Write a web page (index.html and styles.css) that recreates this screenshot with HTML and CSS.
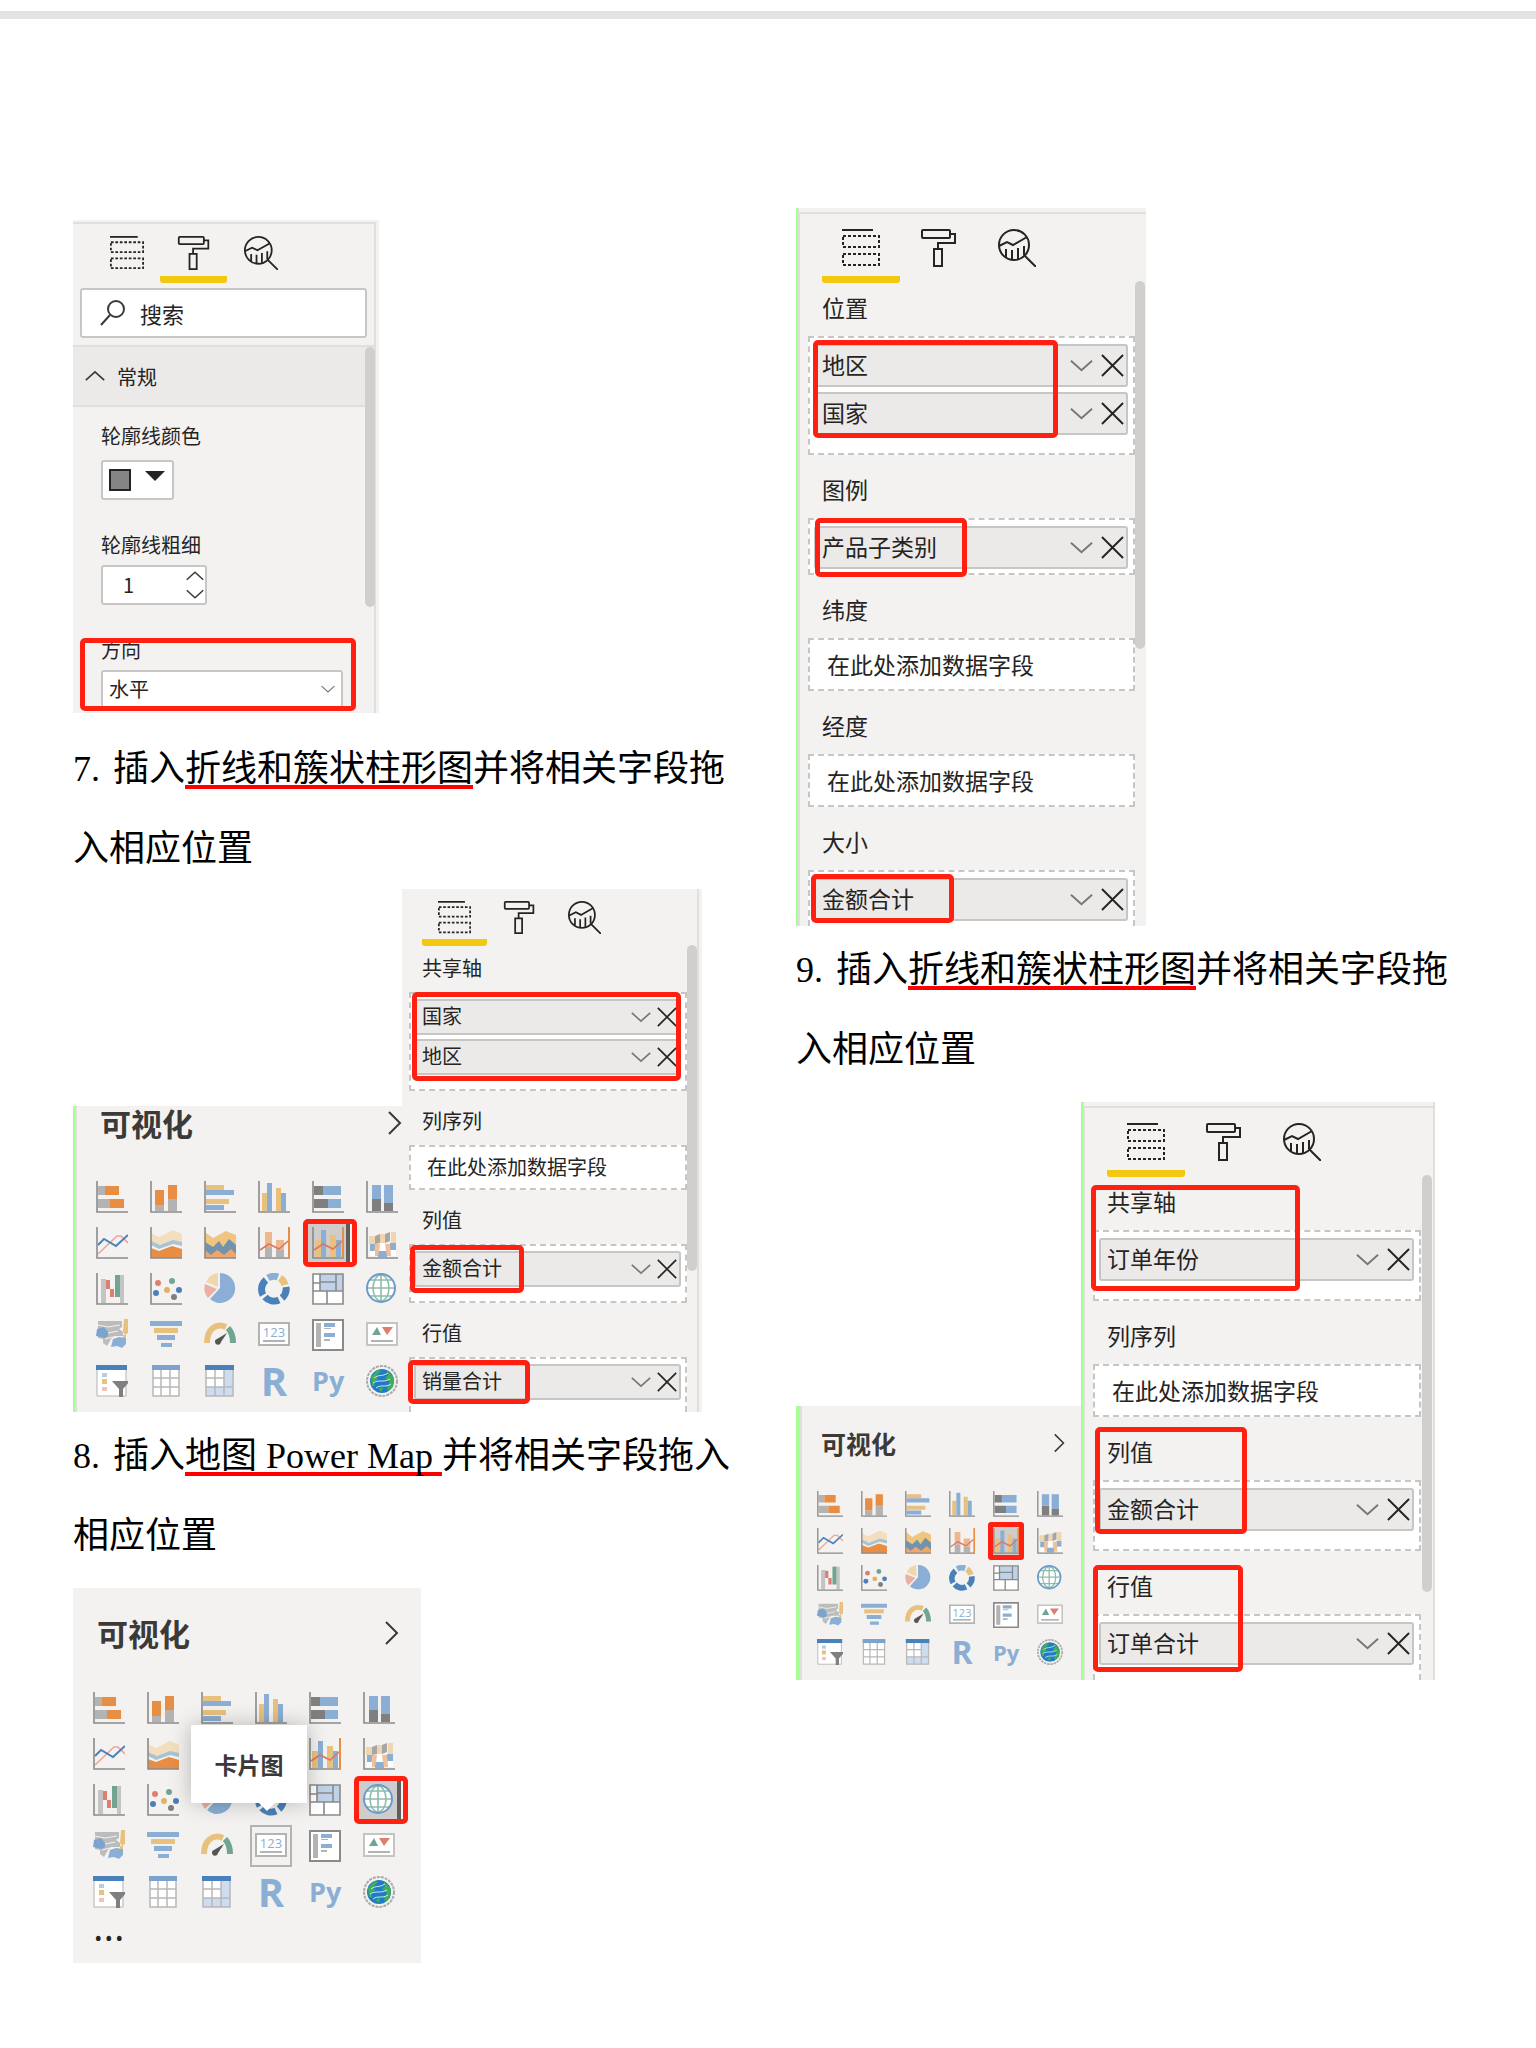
FILE: index.html
```html
<!DOCTYPE html>
<html lang="zh-CN">
<head>
  <meta charset="UTF-8">
  <meta name="viewport" content="width=device-width, initial-scale=1.0">
  <title>Power BI 实验步骤</title>
  <link rel="stylesheet" href="styles.css">
  <script src="script.js"></script>
</head>
<body>
  <!-- 图标库 -->
  <svg class="sprite" xmlns="http://www.w3.org/2000/svg">
    <symbol id="t-fields" viewBox="0 0 38 38">
      <path d="M0 1H31" stroke="#252423" stroke-width="2"/>
      <path d="M1 7H37V18H1ZM1 25H37V36H1Z" fill="none" stroke="#252423" stroke-width="2" stroke-dasharray="3 2"/>
    </symbol>
    <symbol id="t-format" viewBox="0 0 38 38">
      <g fill="none" stroke="#252423" stroke-width="2">
        <rect x="2" y="1" width="28" height="8" rx="1"/>
        <path d="M30 5H35V14H18V20"/>
        <rect x="14" y="20" width="8" height="17"/>
      </g>
    </symbol>
    <symbol id="t-analytics" viewBox="0 0 38 38">
      <g fill="none" stroke="#252423" stroke-width="2">
        <circle cx="16" cy="16" r="15"/>
        <path d="M1 17L9 13L15 16L29 8M8 20V28M14 21V31M20 19V30M26 17V26M26 26L38 38"/>
      </g>
    </symbol>
    <symbol id="i-down" viewBox="0 0 24 24"><path d="M1 7L12 17L23 7" fill="none" stroke="#797775" stroke-width="2"/></symbol>
    <symbol id="i-up" viewBox="0 0 24 24"><path d="M1 17L12 7L23 17" fill="none" stroke="#3b3a39" stroke-width="2"/></symbol>
    <symbol id="i-right" viewBox="0 0 14 24"><path d="M1 1L12 12L1 23" fill="none" stroke="#3b3a39" stroke-width="2"/></symbol>
    <symbol id="i-close" viewBox="0 0 24 24"><path d="M1 1L23 23M23 1L1 23" fill="none" stroke="#252423" stroke-width="2"/></symbol>
    <symbol id="i-search" viewBox="0 0 26 26"><circle cx="16" cy="9" r="8" fill="none" stroke="#3b3a39" stroke-width="2"/><path d="M10 15L1 25" stroke="#3b3a39" stroke-width="2"/></symbol>

    <symbol id="v-bar" viewBox="0 0 32 32">
      <path fill="#b3b3b3" d="M2 5h7v9H2zM2 18h12v9H2z"/><path fill="#e88e44" d="M9 5h14v9H9zM14 18h14v9H14z"/>
      <path class="axis" d="M1 0V31H32"/>
    </symbol>
    <symbol id="v-col" viewBox="0 0 32 32">
      <path fill="#b3b3b3" d="M5 24h9v6H5zM18 18h9v12H18z"/><path fill="#e88e44" d="M5 9h9v15H5zM18 4h9v14H18z"/>
      <path class="axis" d="M1 0V31H32"/>
    </symbol>
    <symbol id="v-cbar" viewBox="0 0 32 32">
      <path fill="#e9c17f" d="M2 4h18v5H2zM2 18h23v5H2z"/><path fill="#8bafd4" d="M2 9h28v5H2zM2 24h18v5H2z"/>
      <path class="axis" d="M1 0V31H32"/>
    </symbol>
    <symbol id="v-ccol" viewBox="0 0 32 32">
      <path fill="#e9c17f" d="M4 12h5v18H4zM18 7h5v23h-5z"/><path fill="#8bafd4" d="M9 2h5v28H9zM23 12h5v18h-5z"/>
      <path class="axis" d="M1 0V31H32"/>
    </symbol>
    <symbol id="v-pbar" viewBox="0 0 32 32">
      <path fill="#7f7f7f" d="M2 5h9v9H2zM2 18h14v9H2z"/><path fill="#8bafd4" d="M11 5h18v9H11zM16 18h13v9H16z"/>
      <path class="axis" d="M1 0V31H32"/>
    </symbol>
    <symbol id="v-pcol" viewBox="0 0 32 32">
      <path fill="#7f7f7f" d="M6 18h9v12H6zM18 22h9v8h-9z"/><path fill="#8bafd4" d="M6 4h9v14H6zM18 4h9v18h-9z"/>
      <path class="axis" d="M1 0V31H32"/>
    </symbol>
    <symbol id="v-line" viewBox="0 0 32 32">
      <path d="M2 27L21 9L25 9L32 16" fill="none" stroke="#eda597" stroke-width="1.6"/>
      <path d="M2 18L8 12L20 19L32 8" fill="none" stroke="#4a81ba" stroke-width="2"/>
      <path class="axis" d="M1 0V31H32"/>
    </symbol>
    <symbol id="v-area" viewBox="0 0 32 32">
      <path fill="#f3dfbf" d="M1 6L9 10L23 3L32 7V16L1 18Z"/><path fill="#a6c4d4" d="M1 14L10 18L23 13L32 15V23L1 24Z"/>
      <path fill="#f3f2f1" d="M1 18L9 22L23 17L32 19V23L1 25Z"/><path fill="#e88e44" d="M1 21L9 24L22 19L32 22V31H1Z"/>
      <path class="axis" d="M1 0V31H32"/>
    </symbol>
    <symbol id="v-sarea" viewBox="0 0 32 32">
      <path fill="#f0c580" d="M1 5L9 11L22 4L32 8V28H1Z"/><path fill="#f1a569" d="M1 22H32V31H1Z"/>
      <path fill="#7293ad" d="M1 15L9 20L15 14L19 20L25 12L32 18V27L27 22L20 28L13 23L7 28L1 23Z"/>
      <path class="axis" d="M1 0V31H32"/>
    </symbol>
    <symbol id="v-lscol" viewBox="0 0 32 32">
      <path fill="#b3b3b3" d="M7 20h7v10H7zM18 23h8v7h-8z"/><path fill="#efb78c" d="M7 5h7v15H7zM18 13h8v10h-8z"/>
      <path d="M2 23L11 17L21 22L30 14" fill="none" stroke="#dd7564" stroke-width="1.6"/>
      <path class="axis" d="M1 0V31H32"/><path d="M31 0V31" stroke="#e88e44" stroke-width="2"/>
    </symbol>
    <symbol id="v-lccol" viewBox="0 0 32 32">
      <path fill="#e9c17f" d="M3 13h6v17H3zM18 8h6v22h-6z"/><path fill="#8bafd4" d="M9 3h5v27H9zM24 13h5v17h-5z"/>
      <path d="M2 23L11 17L21 22L30 14" fill="none" stroke="#dd7564" stroke-width="1.6"/>
      <path class="axis" d="M1 0V31H32"/><path d="M31 0V31" stroke="#e88e44" stroke-width="2"/>
    </symbol>
    <symbol id="v-ribbon" viewBox="0 0 32 32">
      <path fill="#f0d6af" d="M3 9h6v8H3zM14 7h5v9h-5zM25 5h5v11h-5z"/><path fill="#a6a6a6" d="M9 9l5-2v9l-5 1zM19 7l5-2v9l-5 2z"/>
      <path fill="#8bafd4" d="M4 17h5v7H4zM24 16h6v7h-6zM12 24h9v6h-9z"/><path fill="#f1c09a" d="M9 17h5l-2 12H8zM19 17h5l1 12h-4z"/>
      <path fill="#fff" d="M14 16h5v8h-5zM4 24h5v5H4zM25 23h5v6h-5z"/>
      <path class="axis" d="M1 0V31H32"/>
    </symbol>
    <symbol id="v-fall" viewBox="0 0 32 32">
      <path fill="#c4c4c4" d="M5 6h5v24H5zM24 2h4v28h-4z"/><path fill="#dd7f6e" d="M10 7h4v9h-4zM14 16h4v8h-4z"/><path fill="#71a592" d="M19 2h5v22h-5z"/>
      <path class="axis" d="M1 0V31H32"/>
    </symbol>
    <symbol id="v-scatter" viewBox="0 0 32 32">
      <circle cx="8" cy="10" r="3" fill="#dd7f6e"/><circle cx="22" cy="8" r="3" fill="#71a592"/><circle cx="17" cy="17" r="3" fill="#e0b364"/>
      <circle cx="6" cy="20" r="3" fill="#4a81ba"/><circle cx="29" cy="17" r="3" fill="#4a81ba"/><circle cx="24" cy="24" r="3" fill="#7f7f7f"/>
      <path class="axis" d="M1 0V31H32"/>
    </symbol>
    <symbol id="v-pie" viewBox="0 0 32 32">
      <path fill="#8bafd4" d="M16 15V0A15 15 0 1 1 6 26Z"/><path fill="#f0d6af" d="M14 14V0A15 15 0 0 0 2 9Z"/><path fill="#eab0a2" d="M13 16L1 11A15 15 0 0 0 4 25Z"/>
    </symbol>
    <symbol id="v-donut" viewBox="0 0 32 32">
      <g fill="none" stroke-width="7">
        <path d="M10 5A12 12 0 0 1 20 4" stroke="#8bafd4"/><path d="M22 5A12 12 0 0 1 27 12" stroke="#e9c17f"/>
        <path d="M28 14A12 12 0 0 1 24 25M21 27A12 12 0 0 1 7 24M5 22A12 12 0 0 1 8 7" stroke="#4a81ba"/>
      </g>
    </symbol>
    <symbol id="v-tree" viewBox="0 0 32 32">
      <path fill="#fff" d="M1 1H31V31H1Z"/><path fill="#bfd2e8" d="M8 1H31V18H8Z"/>
      <path d="M1 1H31V31H1ZM1 18H31M8 1V18M1 10H8M15 18V31M8 9H24M24 1V18" fill="none" stroke="#8a8a8a" stroke-width="1.6"/>
    </symbol>
    <symbol id="v-globe" viewBox="0 0 32 32">
      <circle cx="15" cy="15" r="14" fill="#fff"/>
      <g fill="none" stroke="#8dbcaa" stroke-width="1.6"><ellipse cx="15" cy="15" rx="8" ry="13"/><path d="M1 15H29M4 7H26M4 23H26M15 1V29"/></g>
      <circle cx="15" cy="15" r="14" fill="none" stroke="#6b9bc9" stroke-width="2"/>
    </symbol>
    <symbol id="v-filled" viewBox="0 0 32 32">
      <path fill="#bcbcbc" d="M2 2H26V8L23 10L27 13V17H18L15 20L11 27L7 24V20L2 19V8Z"/>
      <path fill="#7ba3ce" d="M1 10L8 8L12 13V17L9 19L0 17Z"/>
      <path fill="#8bafd4" d="M17 20L23 18L30 19L30 25L26 29L21 27L15 28Z"/><path fill="#e9c17f" d="M28 0h4v14l-3 2-2-3zM27 16h3v3h-3z"/>
      <path d="M2 6L12 8L24 6M12 14L22 12M9 20L17 18" stroke="#f3f2f1" fill="none"/>
    </symbol>
    <symbol id="v-funnel" viewBox="0 0 32 32">
      <path fill="#8bafd4" d="M0 2h32v5H0zM7 16h18v5H7zM11 24h11v4H11z"/><path fill="#e9c17f" d="M4 9h24v5H4z"/>
    </symbol>
    <symbol id="v-gauge" viewBox="0 0 32 32">
      <path d="M3 24C3 9 13 4 22 8" fill="none" stroke="#e9c17f" stroke-width="6"/><path d="M24 9C28 13 29 17 29 24" fill="none" stroke="#71a592" stroke-width="6"/>
      <path fill="#555" d="M23 14L17 23A3 3 0 1 1 13 20Z"/>
    </symbol>
    <symbol id="v-card" viewBox="0 0 32 32">
      <path d="M1 4H31V26H1Z" fill="#fff" stroke="#b3b3b3" stroke-width="2"/><path d="M5 22H27" stroke="#b3b3b3" stroke-width="2"/>
    </symbol>
    <symbol id="v-multi" viewBox="0 0 32 32">
      <path d="M1 1H31V31H1Z" fill="#fff" stroke="#8a8a8a" stroke-width="2"/><path fill="#b3b3b3" d="M4 4h5v24H4zM12 9h7v1h-7zM12 20h6v2h-6z"/>
      <path fill="#8bafd4" d="M12 4h11v4H12zM12 14h11v4H12z"/>
    </symbol>
    <symbol id="v-kpi" viewBox="0 0 32 32">
      <path d="M1 4H31V26H1Z" fill="#fff" stroke="#c4c4c4" stroke-width="2"/><path d="M5 22H27" stroke="#b3b3b3" stroke-width="2"/>
      <path fill="#71a592" d="M6 16L11 8L15 16Z"/><path fill="#dd7f6e" d="M16 8H27L21 16Z"/>
    </symbol>
    <symbol id="v-slicer" viewBox="0 0 32 32">
      <path d="M1 1H30V31H1Z" fill="#fff" stroke="#b3b3b3"/><path fill="#4a81ba" d="M0 0h31v5H0z"/>
      <path fill="#b7cde6" d="M6 8h5v4H6z"/><path fill="#e9c17f" d="M6 14h5v5H6z"/><path fill="#f0c3b8" d="M6 22h5v4H6z"/>
      <path fill="#7f7f7f" d="M16 16H34L27 24V33H23V24Z"/>
    </symbol>
    <symbol id="v-table" viewBox="0 0 32 32">
      <path d="M3 2H29V31H3ZM3 13H29M3 22H29M11 5V31M20 5V31" fill="#fff" stroke="#b8b8b8" stroke-width="1.5"/><path fill="#7ba3ce" d="M2 0h28v5H2z"/>
    </symbol>
    <symbol id="v-matrix" viewBox="0 0 32 32">
      <path fill="#fff" d="M2 2H29V31H2Z"/><path fill="#cddcee" d="M20 5h9v26H2v-9h18z"/>
      <path d="M2 2H29V31H2ZM2 13H20M2 22H29M11 5V31M20 5V31" fill="none" stroke="#b8b8b8" stroke-width="1.5"/><path fill="#4a81ba" d="M1 0h29v5H1z"/>
    </symbol>
    <symbol id="v-arcgis" viewBox="0 0 32 32">
      <circle cx="16" cy="16" r="15" fill="none" stroke="#aaa" stroke-width="2" stroke-dasharray="3 1"/><circle cx="16" cy="16" r="12" fill="#1f7cc4"/>
      <path fill="#3fae5a" d="M5 12L11 5L15 6L10 11L12 14L8 17L9 21L6 21ZM21 5L28 13L27 22L22 26L21 22L24 17L19 13L22 10ZM12 24L17 22L16 27Z"/>
      <path d="M8 13C13 9 16 12 22 8M7 18C13 14 17 18 24 14M10 23C15 19 19 23 25 19" fill="none" stroke="#d5e6f2" stroke-width="1"/>
    </symbol>
  </svg>

  <div class="page-break"></div>

  <main class="page">
    <section class="column column-left">

      <figure class="shot">
        <div class="pane pane-format">
          <nav class="tabs">
            <button class="tab" aria-label="字段"><svg><use href="#t-fields"/></svg></button>
            <button class="tab active" aria-label="格式"><svg><use href="#t-format"/></svg></button>
            <button class="tab" aria-label="分析"><svg><use href="#t-analytics"/></svg></button>
          </nav>
          <label class="search">
            <svg><use href="#i-search"/></svg>
            <input type="text" placeholder="搜索" aria-label="搜索">
          </label>
          <button class="group-title"><svg><use href="#i-up"/></svg>常规</button>
          <div class="form">
            <div class="form-row">
              <label for="color">轮廓线颜色</label>
              <button class="swatch" id="color"><i></i><b></b></button>
            </div>
            <div class="form-row">
              <label for="weight">轮廓线粗细</label>
              <div class="stepper">
                <input type="number" id="weight" value="1">
                <div class="steps">
                  <button aria-label="增加"><svg><use href="#i-up"/></svg></button>
                  <button aria-label="减少"><svg class="flip"><use href="#i-up"/></svg></button>
                </div>
              </div>
            </div>
            <div class="form-row">
              <label for="direction">方向</label>
              <div class="dropdown">
                <select id="direction"><option>水平</option></select>
                <svg><use href="#i-down"/></svg>
              </div>
            </div>
          </div>
          <span class="scrollbar"></span>
          <span class="mark mark-direction"></span>
        </div>
      </figure>

      <p class="step step-first"><span class="num">7.</span>插入<u>折线和簇状柱形图</u>并将相关字段拖入相应位置</p>

      <figure class="shot">
        <div class="gallery gallery-cropped">
          <h2>可视化<svg><use href="#i-right"/></svg></h2>
          <div class="viz-grid" data-selected="lccol"></div>
        </div>
        <div class="pane pane-fields pane-small">
          <nav class="tabs">
            <button class="tab active" aria-label="字段"><svg><use href="#t-fields"/></svg></button>
            <button class="tab" aria-label="格式"><svg><use href="#t-format"/></svg></button>
            <button class="tab" aria-label="分析"><svg><use href="#t-analytics"/></svg></button>
          </nav>
          <h3>共享轴</h3>
          <div class="well">
            <div class="field">国家<button aria-label="选项"><svg><use href="#i-down"/></svg></button><button aria-label="删除"><svg><use href="#i-close"/></svg></button></div>
            <div class="field">地区<button aria-label="选项"><svg><use href="#i-down"/></svg></button><button aria-label="删除"><svg><use href="#i-close"/></svg></button></div>
          </div>
          <h3>列序列</h3>
          <div class="well empty">在此处添加数据字段</div>
          <h3>列值</h3>
          <div class="well">
            <div class="field">金额合计<button aria-label="选项"><svg><use href="#i-down"/></svg></button><button aria-label="删除"><svg><use href="#i-close"/></svg></button></div>
          </div>
          <h3>行值</h3>
          <div class="well last">
            <div class="field">销量合计<button aria-label="选项"><svg><use href="#i-down"/></svg></button><button aria-label="删除"><svg><use href="#i-close"/></svg></button></div>
          </div>
          <span class="scrollbar"></span>
          <span class="mark mark-axis"></span>
          <span class="mark mark-column"></span>
          <span class="mark mark-line"></span>
        </div>
      </figure>

      <p class="step"><span class="num">8.</span>插入<u>地图 Power Map </u>并将相关字段拖入相应位置</p>

      <figure class="shot spaced">
        <div class="gallery gallery-full">
          <h2>可视化<svg><use href="#i-right"/></svg></h2>
          <div class="viz-grid" data-selected="globe" data-hover="card"></div>
          <div class="more">···</div>
          <div class="tooltip">卡片图</div>
        </div>
      </figure>
    </section>

    <section class="column">

      <figure class="shot">
        <div class="pane pane-fields pane-map">
          <nav class="tabs">
            <button class="tab active" aria-label="字段"><svg><use href="#t-fields"/></svg></button>
            <button class="tab" aria-label="格式"><svg><use href="#t-format"/></svg></button>
            <button class="tab" aria-label="分析"><svg><use href="#t-analytics"/></svg></button>
          </nav>
          <h3>位置</h3>
          <div class="well">
            <div class="field">地区<button aria-label="选项"><svg><use href="#i-down"/></svg></button><button aria-label="删除"><svg><use href="#i-close"/></svg></button></div>
            <div class="field">国家<button aria-label="选项"><svg><use href="#i-down"/></svg></button><button aria-label="删除"><svg><use href="#i-close"/></svg></button></div>
          </div>
          <h3>图例</h3>
          <div class="well single">
            <div class="field">产品子类别<button aria-label="选项"><svg><use href="#i-down"/></svg></button><button aria-label="删除"><svg><use href="#i-close"/></svg></button></div>
          </div>
          <h3>纬度</h3>
          <div class="well empty">在此处添加数据字段</div>
          <h3>经度</h3>
          <div class="well empty">在此处添加数据字段</div>
          <h3>大小</h3>
          <div class="well last">
            <div class="field">金额合计<button aria-label="选项"><svg><use href="#i-down"/></svg></button><button aria-label="删除"><svg><use href="#i-close"/></svg></button></div>
          </div>
          <span class="scrollbar"></span>
          <span class="mark mark-place"></span>
          <span class="mark mark-legend"></span>
          <span class="mark mark-size"></span>
        </div>
      </figure>

      <p class="step"><span class="num">9.</span>插入<u>折线和簇状柱形图</u>并将相关字段拖入相应位置</p>

      <figure class="shot spaced">
        <div class="gallery gallery-small">
          <h2>可视化<svg><use href="#i-right"/></svg></h2>
          <div class="viz-grid" data-selected="lccol"></div>
        </div>
        <div class="pane pane-fields pane-order">
          <nav class="tabs">
            <button class="tab active" aria-label="字段"><svg><use href="#t-fields"/></svg></button>
            <button class="tab" aria-label="格式"><svg><use href="#t-format"/></svg></button>
            <button class="tab" aria-label="分析"><svg><use href="#t-analytics"/></svg></button>
          </nav>
          <h3>共享轴</h3>
          <div class="well">
            <div class="field">订单年份<button aria-label="选项"><svg><use href="#i-down"/></svg></button><button aria-label="删除"><svg><use href="#i-close"/></svg></button></div>
          </div>
          <h3>列序列</h3>
          <div class="well empty">在此处添加数据字段</div>
          <h3>列值</h3>
          <div class="well">
            <div class="field">金额合计<button aria-label="选项"><svg><use href="#i-down"/></svg></button><button aria-label="删除"><svg><use href="#i-close"/></svg></button></div>
          </div>
          <h3>行值</h3>
          <div class="well last">
            <div class="field">订单合计<button aria-label="选项"><svg><use href="#i-down"/></svg></button><button aria-label="删除"><svg><use href="#i-close"/></svg></button></div>
          </div>
          <span class="scrollbar"></span>
          <span class="mark mark-axis"></span>
          <span class="mark mark-column"></span>
          <span class="mark mark-line"></span>
        </div>
      </figure>
    </section>
  </main>
</body>
</html>
```
FILE: styles.css
```css
* {
  margin: 0;
  padding: 0;
  box-sizing: border-box;
}
body {
  background: #fff;
  color: #000;
  font-family: "Liberation Serif", "Noto Sans CJK SC", serif;
}
button, input, select {
  border: none;
  background: none;
  color: inherit;
  font: inherit;
}
svg {
  display: block;
}
.sprite {
  position: absolute;
  width: 0;
  height: 0;
}
.axis {
  fill: none;
  stroke: #8a8a8a;
  stroke-width: 1.6;
}
.page-break {
  height: 8px;
  margin-top: 11px;
  background: #e3e3e3;
}
.page {
  display: grid;
  grid-template-columns: 1fr 1fr;
  gap: 56px;
  padding: 189px 73px 80px;
}
.column-left {
  padding-top: 12px;
}

/* 步骤文字 */
.step {
  margin-top: 4px;
  font-size: 36px;
  line-height: 80px;
}
.step-first {
  margin-top: 16px;
}
.step u {
  text-decoration: underline 4px #f00;
  text-underline-offset: 4px;
  text-decoration-skip-ink: none;
}
.num {
  display: inline-block;
  width: 40px;
}

.shot {
  display: flex;
  align-items: flex-end;
  color: #252423;
  font-family: "Noto Sans CJK SC", sans-serif;
}
.spaced {
  margin-top: 12px;
}

/* 字段 / 格式窗格 */
.pane {
  --tab: 78px;
  --icon: 38px;
  position: relative;
  flex: none;
  background: #f3f2f1;
  font-size: 23px;
}
.tabs {
  display: flex;
  height: 75px;
  padding: 0 26px;
  border-top: 4px solid #f3f2f1;
  box-shadow: inset 0 2px #e1dfdd;
}
.tab {
  display: flex;
  justify-content: center;
  width: var(--tab);
  padding-top: 17px;
  border-bottom: 7px solid transparent;
}
.tab.active {
  border: none;
  background: linear-gradient(#f2c811, #f2c811) bottom / 100% 7px no-repeat;
  border-radius: 3px;
}
.tab svg {
  width: var(--icon);
  height: var(--icon);
}
.scrollbar {
  position: absolute;
  right: 1px;
  width: 10px;
  border-radius: 5px;
  background: #d0cfcd;
}
.mark {
  position: absolute;
  border: 5px solid #ff2012;
  border-radius: 5px;
}

.pane-format {
  --tab: 67px;
  --icon: 34px;
  width: 306px;
  height: 493px;
  border-right: 3px solid #f3f2f1;
  box-shadow: inset -2px 0 #e1dfdd;
  font-size: 20px;
}
.pane-format .tabs {
  height: 63px;
  padding: 0 20px;
  border-top-width: 2px;
}
.pane-format .tab {
  padding-top: 14px;
}
.search {
  display: flex;
  align-items: center;
  gap: 14px;
  height: 50px;
  margin: 5px 9px 7px 7px;
  padding: 0 18px;
  border: 2px solid #c8c6c4;
  border-radius: 3px;
  background: #fff;
}
.search svg {
  flex: none;
  width: 26px;
  height: 26px;
}
.search input {
  width: 100%;
  font-size: 22px;
  line-height: 32px;
}
.search input::placeholder {
  color: #252423;
}
.group-title {
  display: flex;
  align-items: center;
  gap: 12px;
  width: calc(100% - 2px);
  height: 62px;
  padding-left: 12px;
  border-top: 2px solid #e1dfdd;
  border-bottom: 2px solid #e1dfdd;
  background: #ebeae9;
}
.group-title svg {
  width: 20px;
  height: 20px;
}
.form {
  padding: 13px 32px 0 28px;
}
.form-row {
  display: flex;
  flex-direction: column;
  align-items: flex-start;
  gap: 4px;
  margin-bottom: 29px;
  line-height: 32px;
}
.swatch {
  display: flex;
  gap: 14px;
  width: 73px;
  height: 40px;
  margin-top: 4px;
  padding: 7px 6px;
  border: 2px solid #c8c6c4;
  border-radius: 3px;
  background: #fff;
}
.swatch i {
  width: 22px;
  height: 22px;
  border: 2px solid #252423;
  background: #858585;
}
.swatch b {
  height: 0;
  margin-top: 2px;
  border: 10px solid transparent;
  border-top-color: #252423;
}
.stepper {
  display: flex;
  width: 106px;
  height: 40px;
  border: 2px solid #c8c6c4;
  border-radius: 3px;
  background: #fff;
}
.stepper input {
  width: 82px;
  padding-left: 20px;
  appearance: textfield;
}
.stepper input::-webkit-inner-spin-button {
  display: none;
}
.steps {
  display: flex;
  flex-direction: column;
  justify-content: space-between;
}
.steps svg {
  width: 20px;
  height: 18px;
}
.flip {
  transform: rotate(180deg);
}
.dropdown {
  display: flex;
  align-items: center;
  width: 242px;
  height: 38px;
  border: 2px solid #c8c6c4;
  border-radius: 3px;
  background: #fff;
}
.dropdown select {
  flex: 1;
  padding-left: 6px;
  appearance: none;
}
.dropdown svg {
  width: 14px;
  height: 14px;
  margin-right: 6px;
}
.pane-format .scrollbar {
  top: 127px;
  height: 260px;
}
.mark-direction {
  top: 418px;
  left: 7px;
  width: 276px;
  height: 73px;
}

.pane h3 {
  padding: 19px 0 14px 26px;
  font-size: inherit;
  font-weight: normal;
  line-height: 30px;
}
.pane .tabs + h3 {
  padding-top: 9px;
}
.well {
  display: flex;
  flex-direction: column;
  gap: 5px;
  margin: 0 11px 0 12px;
  padding: 6px 5px 18px 4px;
  border: 2px dashed #c8c6c4;
  background: #fff;
}
.well.single {
  padding-bottom: 4px;
}
.well.empty {
  padding: 9px 17px 10px;
  line-height: 30px;
}
.well.last {
  padding-bottom: 5px;
  border-bottom: none;
}
.field {
  display: flex;
  gap: 8px;
  height: 43px;
  padding: 0 2px 0 6px;
  border: 2px solid #c8c6c4;
  border-radius: 3px;
  background: #ebeae9;
  line-height: 36px;
}
.field button:first-of-type {
  margin-left: auto;
}
.field svg {
  width: 23px;
  height: 23px;
}

.pane-map, .pane-order {
  box-shadow: inset 2px 0 #a6ff94, inset 4px 0 #e1dfdd;
}
.pane-map .tabs, .pane-order .tabs {
  margin-left: 3px;
  padding-left: 23px;
}
.pane-map {
  width: 350px;
}
.pane-map .scrollbar {
  top: 73px;
  height: 368px;
}
.mark-place {
  top: 132px;
  left: 17px;
  width: 245px;
  height: 98px;
}
.mark-legend {
  top: 310px;
  left: 19px;
  width: 152px;
  height: 59px;
}
.mark-size {
  top: 666px;
  left: 15px;
  width: 143px;
  height: 49px;
}

.pane-order {
  width: 354px;
  border-right: 2px solid #e1dfdd;
}
.pane-order .well {
  margin-right: 12px;
}
.pane-order .well.last {
  padding-bottom: 15px;
}
.pane-order .scrollbar {
  top: 73px;
  height: 417px;
}
.pane-order .mark-axis {
  top: 83px;
  left: 10px;
  width: 209px;
  height: 106px;
}
.pane-order .mark-column {
  top: 325px;
  left: 14px;
  width: 152px;
  height: 107px;
}
.pane-order .mark-line {
  top: 463px;
  left: 12px;
  width: 150px;
  height: 107px;
}

.pane-small {
  --tab: 65px;
  --icon: 33px;
  width: 300px;
  border-right: 3px solid #f3f2f1;
  box-shadow: inset -2px 0 #e1dfdd;
  font-size: 20px;
}
.pane-small .tabs {
  height: 57px;
  padding: 0 20px;
  border-top: none;
  box-shadow: none;
}
.pane-small .tab {
  padding-top: 12px;
}
.pane-small h3 {
  padding: 17px 0 11px 20px;
  line-height: 26px;
}
.pane-small .well {
  gap: 4px;
  margin: 0 12px 0 7px;
  padding: 5px 4px 14px 3px;
}
.pane-small .well.empty {
  padding: 7px 16px 8px;
  line-height: 26px;
}
.pane-small .well.last {
  padding-bottom: 12px;
}
.pane-small .field {
  gap: 6px;
  height: 36px;
  line-height: 30px;
}
.pane-small .field svg {
  width: 20px;
  height: 20px;
}
.pane-small .scrollbar {
  top: 56px;
  right: 2px;
  height: 326px;
}
.pane-small .mark-axis {
  top: 103px;
  left: 10px;
  width: 269px;
  height: 89px;
}
.pane-small .mark-column {
  top: 356px;
  left: 8px;
  width: 114px;
  height: 48px;
}
.pane-small .mark-line {
  top: 471px;
  left: 6px;
  width: 122px;
  height: 44px;
}

/* 可视化图库 */
.gallery {
  --size: 32px;
  position: relative;
  flex: none;
  background: #f3f2f1;
}
.gallery h2 {
  display: flex;
  align-items: center;
  justify-content: space-between;
  color: #3b3a39;
  font-size: 31px;
  line-height: 34px;
}
.gallery h2 svg {
  width: 14px;
  height: 24px;
}
.viz-grid {
  display: grid;
  grid-template-columns: repeat(6, 54px);
  grid-auto-rows: 46px;
}
.viz {
  position: relative;
  width: var(--size);
  height: var(--size);
  color: #8bafd4;
  font-family: "Open Sans", sans-serif;
  line-height: var(--size);
}
.viz svg {
  position: relative;
  width: 100%;
  height: 100%;
  overflow: visible;
}
.viz-r, .viz-py {
  font-size: 40px;
  font-weight: bold;
}
.viz-py {
  font-size: 27px;
}
.viz-card span {
  position: absolute;
  inset: 0;
  font-size: 13px;
  line-height: 26px;
}
.viz.selected::before {
  content: "";
  position: absolute;
  inset: -3px -6px;
  border-left: 2px solid #605e5c;
  border-right: 4px solid #605e5c;
  background: #cfcdcb;
}
.viz.selected::after {
  content: "";
  position: absolute;
  inset: -8px -13px -8px -9px;
  border: 5px solid #ff2012;
  border-radius: 5px;
}
.viz.hover {
  outline: 2px solid #b3b3b3;
  outline-offset: 3px;
}

.gallery-cropped {
  width: 329px;
  height: 306px;
  padding-left: 23px;
  box-shadow: inset 2px 0 #a6ff94, inset 4px 0 #e1dfdd;
}
.gallery-cropped h2 {
  margin-bottom: 41px;
  padding-left: 4px;
}

.gallery-full {
  width: 348px;
  padding: 28px 0 0 20px;
}
.gallery-full h2 {
  margin-bottom: 42px;
  padding: 0 22px 0 4px;
}
.gallery-full .selected::before {
  border-left: none;
}
.more {
  height: 41px;
  font-family: "Open Sans", sans-serif;
  font-size: 40px;
  line-height: 30px;
}
.tooltip {
  position: absolute;
  top: 137px;
  left: 118px;
  width: 116px;
  color: #3b3a39;
  background: #fff;
  box-shadow: 0 0 20px rgba(0, 0, 0, 0.25);
  font-size: 23px;
  font-weight: bold;
  line-height: 78px;
  text-align: center;
}
.tooltip::after {
  content: "";
  position: absolute;
  top: 100%;
  right: 32px;
  border: 8px solid transparent;
  border-top-color: #fff;
  border-bottom: none;
}

.gallery-small {
  --size: 26px;
  width: 285px;
  height: 274px;
  padding: 20px 0 0 21px;
  box-shadow: inset 4px 0 #a6ff94, inset 6px 0 #e1dfdd;
}
.gallery-small h2 {
  margin-bottom: 31px;
  padding: 0 16px 0 4px;
  font-size: 25px;
}
.gallery-small h2 svg {
  width: 11px;
  height: 20px;
}
.gallery-small .viz-grid {
  grid-template-columns: repeat(6, 44px);
  grid-auto-rows: 37px;
}
.gallery-small .viz-r {
  font-size: 32px;
}
.gallery-small .viz-py {
  font-size: 22px;
}
.gallery-small .viz-card span {
  font-size: 11px;
  line-height: 21px;
}
.gallery-small .selected::before {
  inset: -2px;
  border: none;
}
.gallery-small .selected::after {
  inset: -6px -5px;
  border-radius: 3px;
}
```
FILE: script.js
```js
window.onload = function () {
  var icons = [
    ['bar', '堆积条形图'], ['col', '堆积柱形图'], ['cbar', '簇状条形图'], ['ccol', '簇状柱形图'], ['pbar', '百分比堆积条形图'], ['pcol', '百分比堆积柱形图'],
    ['line', '折线图'], ['area', '分区图'], ['sarea', '堆积面积图'], ['lscol', '折线和堆积柱形图'], ['lccol', '折线和簇状柱形图'], ['ribbon', '功能区图表'],
    ['fall', '瀑布图'], ['scatter', '散点图'], ['pie', '饼图'], ['donut', '环形图'], ['tree', '树状图'], ['globe', '地图'],
    ['filled', '着色地图'], ['funnel', '漏斗图'], ['gauge', '仪表'], ['card', '卡片图'], ['multi', '多行卡'], ['kpi', 'KPI'],
    ['slicer', '切片器'], ['table', '表'], ['matrix', '矩阵'], ['r', 'R 脚本'], ['py', 'Python'], ['arcgis', 'ArcGIS']
  ];
  // 带文字的图标
  var texts = { r: 'R', py: 'Py' };
  var grids = document.querySelectorAll('.viz-grid');

  for (let i = 0; i < grids.length; i++) {
    var html = '';
    for (let j = 0; j < icons.length; j++) {
      var name = icons[j][0];
      var cls = 'viz viz-' + name;
      if (name === grids[i].dataset.selected) cls += ' selected';
      if (name === grids[i].dataset.hover) cls += ' hover';
      var inner = texts[name] || '<svg><use href="#v-' + name + '"/></svg>';
      if (name === 'card') inner += '<span>123</span>';
      html += '<button class="' + cls + '" aria-label="' + icons[j][1] + '">' + inner + '</button>';
    }
    grids[i].innerHTML = html;
  }
};
```
